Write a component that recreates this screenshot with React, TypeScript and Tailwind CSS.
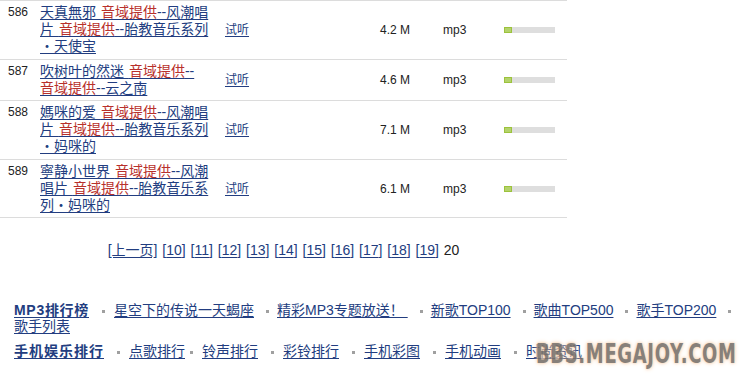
const rows = [
  {
    no: 586,
    lines: ["天真無邪 {音域提供}--风潮唱", "片 {音域提供}--胎教音乐系列", "・天使宝"],
    size: "4.2 M",
    pb: "pb-[4px]",
  },
  {
    no: 587,
    lines: ["吹树叶的然迷 {音域提供}--", "{音域提供}--云之南"],
    size: "4.6 M",
    pb: "pb-[3px]",
  },
  {
    no: 588,
    lines: ["媽咪的爱 {音域提供}--风潮唱", "片 {音域提供}--胎教音乐系列", "・妈咪的"],
    size: "7.1 M",
    pb: "pb-[4px]",
  },
  {
    no: 589,
    lines: ["寧静小世界 {音域提供}--风潮", "唱片 {音域提供}--胎教音乐系", "列・妈咪的"],
    size: "6.1 M",
    pb: "pb-[3px]",
  },
]

const pages = ["10", "11", "12", "13", "14", "15", "16", "17", "18", "19"]

const topLinks = ["星空下的传说一天蝎座", "精彩MP3专题放送！ ", "新歌TOP100", "歌曲TOP500", "歌手TOP200"]
const phoneLinks = ["点歌排行", "铃声排行", "彩铃排行", "手机彩图", "手机动画", "时尚资讯"]

function Line({ text }: { text: string }) {
  const parts = text.split(/(\{[^}]+\})/).filter(Boolean)
  return (
    <span className="block whitespace-pre">
      {parts.map((p, i) =>
        p.startsWith("{") ? (
          <span key={i} className="text-[#b8302c]">
            {p.slice(1, -1)}
          </span>
        ) : (
          <span key={i}>{p}</span>
        )
      )}
    </span>
  )
}

// grey square between footer links
function Dot({ gap = "ml-[13px] mr-[9px]" }: { gap?: string }) {
  return <span className={`inline-block w-[3px] h-[3px] bg-[#a0a0a0] align-middle ${gap}`} />
}

export default function App() {
  return (
    <div className="relative w-[756px] h-[379px] overflow-hidden bg-white text-[#222] font-['Liberation_Sans','Noto_Sans_CJK_SC',sans-serif]">
      <div className="w-[567px] border-b border-[#dcdcdc]">
        {rows.map((row) => (
          <div key={row.no} className={`flex border-t border-[#dcdcdc] pt-[3px] ${row.pb}`}>
            <div className="w-[40px] pl-[8px] text-[12px] leading-[17px]">{row.no}</div>
            <a className="w-[185px] text-[14px] leading-[17px] text-[#223d80] underline decoration-[#223d80] underline-offset-2 cursor-pointer [word-spacing:1px]">
              {row.lines.map((l, i) => (
                <Line key={i} text={l} />
              ))}
            </a>
            <div className="flex items-center w-[120px] text-[12px]">
              <a className="text-[#223d80] underline underline-offset-2 cursor-pointer">试听</a>
            </div>
            <div className="flex items-center justify-end w-[65px] text-[12px]">{row.size}</div>
            <div className="flex items-center w-[94px] pl-[33px] text-[12px]">mp3</div>
            <div className="flex items-center">
              <div className="flex w-[51px] h-[6px] bg-[#dedede]">
                <div className="w-[8px] h-[6px] bg-[#b4d36b] border border-[#9cc23c]" />
              </div>
            </div>
          </div>
        ))}
      </div>

      <div className="w-[567px] mt-[24px] text-center text-[14px] leading-[17px] [word-spacing:1px]">
        <a className="text-[#223d80] underline underline-offset-2 cursor-pointer">[上一页]</a>{" "}
        {pages.map((p) => (
          <span key={p}>
            <a className="text-[#223d80] underline underline-offset-2 cursor-pointer">[{p}]</a>{" "}
          </span>
        ))}
        <span>20</span>
      </div>

      <div className="pl-[14px] mt-[43px] text-[14px] leading-[16px] text-[#223d80]">
        <div className="whitespace-nowrap">
          <a className="font-bold tracking-[0.7px] underline underline-offset-2 cursor-pointer">MP3排行榜</a>
          {topLinks.map((t, i) => (
            <span key={t}>
              <Dot gap={i === 0 ? "ml-[13px] mr-[9px]" : "ml-[12px] mr-[8px]"} />
              <a className="underline underline-offset-2 cursor-pointer whitespace-pre">{t}</a>
            </span>
          ))}
          <Dot gap="ml-[12px] mr-[8px]" />
        </div>
        <div>
          <a className="underline underline-offset-2 cursor-pointer">歌手列表</a>
        </div>
        <div className="mt-[9px] whitespace-nowrap">
          <a className="font-bold tracking-[1px] underline underline-offset-2 cursor-pointer">手机娱乐排行</a>
          {phoneLinks.map((t, i) => (
            <span key={t}>
              <Dot gap={i === 1 ? "ml-[5px] mr-[9px]" : "ml-[13px] mr-[9px]"} />
              <a className="underline underline-offset-2 cursor-pointer">{t}</a>
            </span>
          ))}
        </div>
      </div>

      <div className="absolute left-[536px] top-[340px] text-[26px] leading-[28px] font-bold tracking-[1px] text-[#7b736c] opacity-90 origin-left scale-x-[0.69] [text-shadow:0_0_3px_#f3c59b,0_0_6px_#f7d6b6] font-['DejaVu_Sans',sans-serif]">
        BBS.MEGAJOY.COM
      </div>
    </div>
  )
}
